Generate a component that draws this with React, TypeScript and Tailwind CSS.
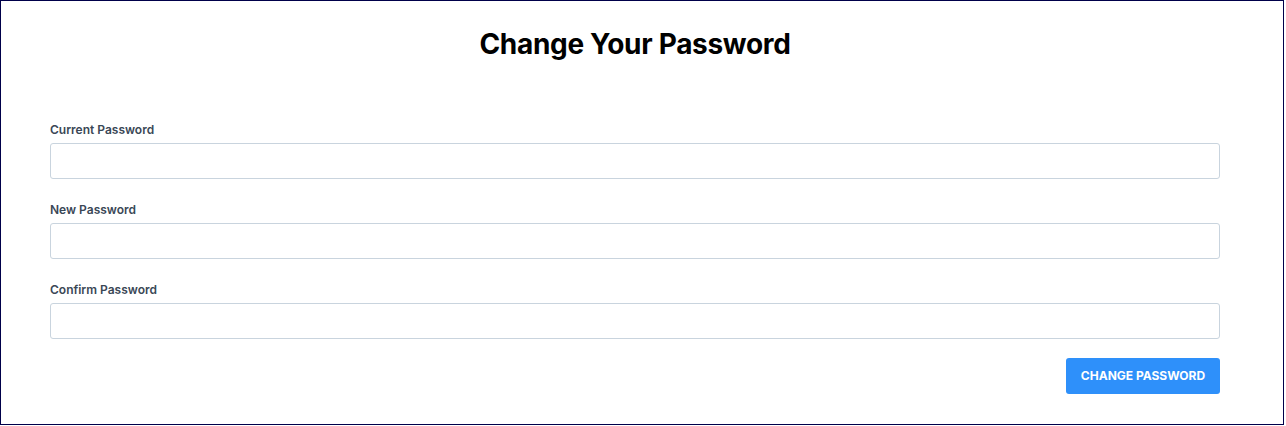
import React from "react";

const fields = ["Current Password", "New Password", "Confirm Password"];

export default function App() {
  return (
    <div className="w-[1284px] h-[425px] border border-[#00004a] bg-white font-['Inter','Lato',sans-serif]">
      <div className="w-[1170px] ml-[49px] pt-[26px]">
        <h1 className="text-center text-[28px] leading-[34px] font-bold text-black tracking-[-0.3px]">
          Change Your Password
        </h1>

        <form className="mt-[61px] flex flex-col" onSubmit={(e) => e.preventDefault()}>
          {fields.map((label) => (
            <div key={label} className="flex flex-col mb-[23px]">
              <label className="text-[12px] leading-[16px] font-semibold text-[#3a4756] mb-[5px]">
                {label}
              </label>
              <input
                type="password"
                className="h-[36px] w-full rounded-[3px] border border-[#c9d4de] bg-white px-3 text-sm outline-none"
              />
            </div>
          ))}

          <div className="flex justify-end -mt-[4px]">
            <button
              type="submit"
              className="h-[36px] w-[154px] rounded-[3px] bg-[#2e90fa] text-white text-[12px] font-bold uppercase"
            >
              Change Password
            </button>
          </div>
        </form>
      </div>
    </div>
  );
}
